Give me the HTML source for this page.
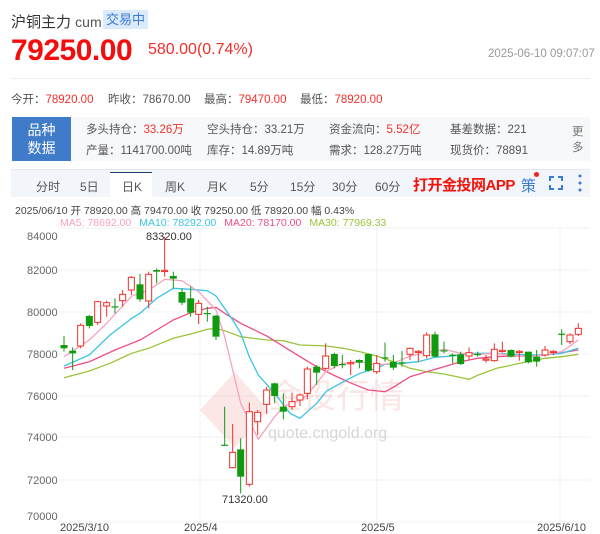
<!DOCTYPE html>
<html><head><meta charset="utf-8"><style>
*{margin:0;padding:0;box-sizing:border-box}
body{width:600px;height:534px;background:#fff;font-family:"Liberation Sans","Noto Sans CJK SC",sans-serif;position:relative;overflow:hidden;color:#333}
.a{position:absolute;white-space:nowrap}
.r{color:#f0302a}
</style></head><body>
<div class="a" style="left:11px;top:11px;font-size:15px;color:#333">沪铜主力 <span style="font-size:14px;color:#555">cum</span></div>
<div class="a" style="left:103px;top:10px;width:45px;height:19px;background:#dcebfb;color:#3a7bd5;font-size:13px;line-height:19px;text-align:center">交易中</div>
<div class="a r" style="left:11px;top:34px;font-size:30px;font-weight:bold;color:#f40d0d;letter-spacing:-0.5px">79250.00</div>
<div class="a r" style="left:148px;top:41px;font-size:16px">580.00(0.74%)</div>
<div class="a" style="left:488px;top:48px;font-size:11.5px;color:#999">2025-06-10 09:07:07</div>
<div class="a" style="left:11px;top:78px;width:579px;height:1px;background:#eee"></div>
<div class="a" style="left:11px;top:91px;font-size:11.5px;color:#555">今开：<span class="r">78920.00</span></div>
<div class="a" style="left:108px;top:91px;font-size:11.5px;color:#555">昨收：78670.00</div>
<div class="a" style="left:204px;top:91px;font-size:11.5px;color:#555">最高：<span class="r">79470.00</span></div>
<div class="a" style="left:300px;top:91px;font-size:11.5px;color:#555">最低：<span class="r">78920.00</span></div>
<div class="a" style="left:71px;top:117px;width:519px;height:44px;background:#f7f8fa"></div>
<div class="a" style="left:12px;top:117px;width:59px;height:44px;background:#3f7bc8;color:#fff;font-size:14px;line-height:18px;text-align:center;padding-top:4px">品种<br>数据</div>
<div class="a" style="left:86px;top:120px;font-size:11.5px;color:#555;line-height:21px">多头持仓：<span class="r">33.26万</span><br>产量：1141700.00吨</div>
<div class="a" style="left:207px;top:120px;font-size:11.5px;color:#555;line-height:21px">空头持仓：33.21万<br>库存：14.89万吨</div>
<div class="a" style="left:329px;top:120px;font-size:11.5px;color:#555;line-height:21px">资金流向：<span class="r">5.52亿</span><br>需求：128.27万吨</div>
<div class="a" style="left:450px;top:120px;font-size:11.5px;color:#555;line-height:21px">基差数据：221<br>现货价：78891</div>
<div class="a" style="left:572px;top:124px;font-size:11.5px;color:#777;line-height:16px">更<br>多</div>
<div class="a" style="left:11px;top:169px;width:579px;height:28px;background:#f2f5fa;border-top:1px solid #e4e9f1"></div>
<div class="a" style="left:110px;top:172px;width:42px;height:26px;background:#fff;border-top:1px solid #1e3a7a"></div>
<div class="a" style="left:0;top:178px;font-size:12px;color:#555;width:600px">
<span class="a" style="left:36px">分时</span><span class="a" style="left:80px">5日</span><span class="a" style="left:122px">日K</span><span class="a" style="left:165px">周K</span><span class="a" style="left:207px">月K</span><span class="a" style="left:250px">5分</span><span class="a" style="left:290px">15分</span><span class="a" style="left:332px">30分</span><span class="a" style="left:375px">60分</span></div>
<div class="a" style="left:413px;top:174px;font-size:15px;font-weight:bold;color:#f0140c;letter-spacing:-0.5px">打开金投网APP</div>
<div class="a" style="left:521px;top:175px;font-size:15px;color:#3a7bd5">策</div>
<div class="a" style="left:534px;top:172px;width:5px;height:5px;border-radius:50%;background:#f02020"></div>
<svg class="a" style="left:549px;top:176px" width="14" height="14"><path d="M1 5V1H5M9 1H13V5M13 9V13H9M5 13H1V9" fill="none" stroke="#3a7bd5" stroke-width="2"/></svg>
<svg class="a" style="left:577px;top:174px" width="6" height="18"><circle cx="3" cy="2" r="1.5" fill="#3a7bd5"/><circle cx="3" cy="9" r="1.5" fill="#3a7bd5"/><circle cx="3" cy="16" r="1.5" fill="#3a7bd5"/></svg>
<svg class="a" id="ch" style="left:0;top:0" width="600" height="534"></svg>
<script>
var s='';
s+='<text x="15" y="214" font-size="10.5" fill="#444" font-family="Liberation Sans, Noto Sans CJK SC">2025/06/10  开 78920.00  高 79470.00  收 79250.00  低 78920.00  幅 0.43%</text>';
var grid=[228,270,312,354,396,437,480,522],lab=[84000,82000,80000,78000,76000,74000,72000,70000];
for(var i=0;i<8;i++){s+='<line x1="58" x2="590" y1="'+grid[i]+'" y2="'+grid[i]+'" stroke="#f0f0f0"/>';s+='<text x="27" y="'+(grid[i]+(i==0?12:i==7?-2:4))+'" font-size="11" fill="#666" font-family="Liberation Sans">'+lab[i]+'</text>';}
[200,377,560].forEach(function(x){s+='<line x1="'+x+'" x2="'+x+'" y1="228" y2="522" stroke="#f0f0f0"/>'});
s+='<g opacity="0.13"><path d="M200 410L235 372L268 410L235 448Z" fill="#e05040"/><text x="268" y="408" font-size="34" fill="#e05040" font-family="Noto Sans CJK SC">金投行情</text></g>';
s+='<text x="268" y="438" font-size="16" fill="#ccc" opacity="0.8" font-family="Liberation Sans">quote.cngold.org</text>';
function z3(a){return a.map(function(p){return [p[0]/3,p[1]/3+260]})}
function z4(a){return a.map(function(p){return [p[0]/3+300,p[1]/3+300]})}
function line(pts,c){s+='<polyline fill="none" stroke="'+c+'" stroke-width="1.3" points="'+pts.map(function(p){return p[0].toFixed(1)+','+p[1].toFixed(1)}).join(' ')+'"/>'}
line(z3([[192,353],[268,333],[330,310],[395,280],[446,265],[520,235],[572,222],[622,208],[648,205],[674,212],[722,230],[800,240],[850,242],[900,255]]).concat(z4([[80,138],[130,145],[180,155],[230,168],[280,185],[330,205],[380,215],[432,222],[507,238],[535,225],[590,205],[660,190],[735,175],[785,170],[835,163]])),'#9bc43c');
line(z3([[192,325],[268,305],[345,270],[420,240],[470,210],[520,180],[572,158],[622,145],[648,142],[674,160],[722,190],[800,228],[900,290]]).concat(z4([[50,200],[100,225],[150,248],[205,270],[255,275],[280,262],[330,230],[380,215],[432,200],[482,185],[533,175],[583,170],[633,168],[685,168],[735,165],[785,158],[835,150]])),'#ee4e85');
line(z3([[192,318],[268,285],[330,225],[395,175],[420,160],[470,115],[520,85],[572,88],[622,92],[648,108],[698,180],[722,220],[748,290],[775,345],[824,400],[870,460],[900,475]]).concat(z4([[50,310],[80,273],[130,245],[180,220],[230,205],[255,193],[306,190],[355,185],[405,172],[458,168],[507,160],[583,160],[633,162],[685,165],[735,165],[785,160],[835,145]])),'#3cc4e6');
line(z3([[192,290],[268,240],[320,190],[395,108],[446,90],[494,58],[546,62],[596,95],[648,150],[674,230],[722,430],[775,538],[824,470],[850,440],[900,420]]).concat(z4([[22,285],[77,215],[127,190],[180,185],[230,195],[280,190],[330,168],[380,158],[432,148],[482,160],[533,163],[583,160],[633,165],[685,170],[735,165],[785,155],[835,120]])),'#f4a3bf');
function cd(x,c,bt,bb,wt,wb){var col=c=='r'?'#f0302a':'#109a10';
s+='<line x1="'+x+'" x2="'+x+'" y1="'+wt+'" y2="'+wb+'" stroke="'+col+'"/>';
var h=Math.max(bb-bt,1.2);
if(c=='r')s+='<rect x="'+(x-3)+'" y="'+bt+'" width="6" height="'+h+'" fill="#fff" stroke="'+col+'"/>';
else s+='<rect x="'+(x-3.5)+'" y="'+bt+'" width="7" height="'+h+'" fill="'+col+'"/>';}
var A=[[192,'g',255,265,228,275],[218,'g',272,280,262,330],[242,'r',196,258,190,265],[268,'g',168,198,165,205],[293,'r',125,187,122,195],[320,'r',128,138,122,170],[345,'g',139,141,115,160],[368,'r',103,122,90,140],[394,'r',52,90,48,105],[420,'g',73,118,42,125],[446,'r',43,123,35,145],[470,'g',30,35,25,70],[494,'r',31,33,-70,50],[520,'g',48,56,35,85],[546,'g',96,128,85,135],[572,'g',115,158,80,170],[596,'r',130,163,120,192],[622,'g',159,161,140,185],[648,'g',167,230,165,240],[674,'g',554,556,440,556],[698,'r',577,623,492,625],[722,'g',568,650,535,700],[748,'r',455,673,428,680],[773,'r',457,485,450,525],[800,'r',390,433,380,462],[824,'g',370,408,368,430],[850,'g',440,455,400,478],[876,'r',425,440,398,450]];
A.forEach(function(a){cd(a[0]/3,a[1],a[2]/3+260,a[3]/3+260,a[4]/3+260,a[5]/3+260)});
var B=[[0,'r',285,300,280,318],[22,'r',207,280,200,298],[50,'g',200,218,195,255],[77,'r',168,205,130,210],[103,'g',162,198,158,205],[127,'g',192,194,165,205],[152,'r',188,190,180,225],[178,'g',180,188,178,205],[205,'g',162,212,160,215],[230,'r',190,215,165,222],[255,'g',172,174,128,185],[280,'g',185,203,165,210],[306,'g',187,189,153,200],[330,'r',145,163,143,180],[355,'r',154,156,150,185],[380,'r',105,167,97,175],[405,'g',103,170,95,172],[432,'g',151,153,125,160],[458,'g',164,166,160,190],[482,'g',163,192,155,195],[507,'r',158,168,142,180],[533,'g',162,164,155,170],[558,'r',177,179,165,188],[583,'r',148,182,130,185],[607,'r',151,153,125,158],[633,'g',150,170,148,172],[658,'r',154,156,150,182],[685,'g',155,187,155,190],[710,'g',170,185,150,200],[735,'r',150,165,138,170],[760,'r',154,156,150,165],[785,'g',101,103,88,135],[810,'r',105,125,100,132],[835,'r',85,103,70,108]];
B.forEach(function(a){cd(a[0]/3+300,a[1],a[2]/3+300,a[3]/3+300,a[4]/3+300,a[5]/3+300)});
s+='<text x="146" y="240" font-size="11" fill="#333" font-family="Liberation Sans">83320.00</text>';
s+='<text x="222" y="503" font-size="11" fill="#333" font-family="Liberation Sans">71320.00</text>';
s+='<text x="60" y="531" font-size="11" fill="#444" font-family="Liberation Sans">2025/3/10</text>';
s+='<text x="184" y="531" font-size="11" fill="#444" font-family="Liberation Sans">2025/4</text>';
s+='<text x="361" y="531" font-size="11" fill="#444" font-family="Liberation Sans">2025/5</text>';
s+='<text x="537" y="531" font-size="11" fill="#444" font-family="Liberation Sans">2025/6/10</text>';
s+='<text x="60" y="226" font-size="10.5" font-family="Liberation Sans"><tspan fill="#f4a3bf">MA5: 78692.00</tspan><tspan fill="#3cc4e6" dx="8">MA10: 78292.00</tspan><tspan fill="#ee4e85" dx="8">MA20: 78170.00</tspan><tspan fill="#9bc43c" dx="8">MA30: 77969.33</tspan></text>';
document.getElementById('ch').innerHTML=s;
</script>
</body></html>
